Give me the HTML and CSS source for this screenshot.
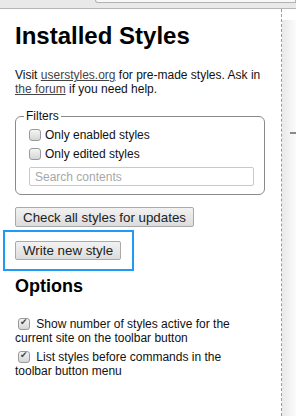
FILE: index.html
```html
<html>
	<head>
		<link rel="stylesheet" href="styles.css">
	</head>
	<body>
		<div class="topbar"><div class="urlbar"></div></div>
		<div class="main">
			<div class="sidebar">
				<h1>Installed Styles</h1>
				<p class="intro">Visit <a href="#">userstyles.org</a> for pre-made styles. Ask in <a href="#">the forum</a> if you need help.</p>
				<fieldset class="filters">
					<legend>Filters</legend>
					<label class="filter"><input type="checkbox" class="check"> Only enabled styles</label>
					<label class="filter"><input type="checkbox" class="check"> Only edited styles</label>
					<input type="text" class="search" placeholder="Search contents">
				</fieldset>
				<div class="actions">
					<button class="btn">Check all styles for updates</button>
				</div>
				<div class="newStyle">
					<button class="btn">Write new style</button>
				</div>
				<h2>Options</h2>
				<div class="option"><input type="checkbox" class="check" checked> Show number of styles active for the current site on the toolbar button</div>
				<div class="option"><input type="checkbox" class="check" checked> List styles before commands in the toolbar button menu</div>
			</div>
			<div class="preview">
				<div class="previewBody">
					<div class="tick"></div>
				</div>
			</div>
		</div>
	</body>
</html>
```
FILE: styles.css
```css
html, body {
	margin: 0;
	padding: 0;
	width: 100%;
	height: 100%;
	background: #fff;
	font-family: "Liberation Sans", Arial, sans-serif;
	font-size: 12px;
	color: #111;
	overflow: hidden;
}

.topbar {
	height: 8px;
	background: #e9e9e9;
	border-bottom: 1px solid #b5b5b5;
}

.urlbar {
	margin-left: 95px;
	height: 2px;
	background: #f7f7f7;
	border: 1px solid #b3b3b3;
	border-top: none;
	border-bottom-left-radius: 3px;
}

.main {
	display: flex;
	flex-direction: row;
	height: calc(100% - 9px);
}

.sidebar {
	width: 266px;
	padding-left: 15px;
	border-right: 1px dashed #9a9a9a;
}

h1 {
	margin: 13px 0 0;
	font-size: 24px;
	font-weight: bold;
	color: #000;
	line-height: 28px;
}

.intro {
	margin: 18px 0 0;
	line-height: 14px;
	width: 252px;
}

.intro a {
	color: #444;
	text-decoration: underline;
}

.filters {
	margin: 13px 0 0;
	width: 225px;
	padding: 2px 10px 8px 13px;
	border: 1px solid #8a8a8a;
	border-radius: 6px;
}

.filters legend {
	margin-left: -5px;
	padding: 0 2px;
	line-height: 14px;
}

.filter {
	display: flex;
	align-items: center;
	height: 19px;
}

.check {
	-webkit-appearance: none;
	appearance: none;
	width: 12px;
	height: 12px;
	margin: 0 4px 0 0;
	border: 1px solid #9a9a9a;
	border-radius: 3px;
	background: linear-gradient(#f4f4f4, #d6d6d6);
	box-sizing: border-box;
	position: relative;
	vertical-align: -2px;
}

.check:checked::after {
	content: "\2714";
	position: absolute;
	left: 1px;
	top: -2px;
	font-family: "DejaVu Sans", sans-serif;
	font-size: 9px;
	color: #444;
}

.search {
	display: block;
	margin-top: 4px;
	width: 225px;
	height: 19px;
	box-sizing: border-box;
	border: 1px solid #c9c9c9;
	border-radius: 2px;
	padding: 0 5px;
	font-family: "Liberation Sans", Arial, sans-serif;
	font-size: 12px;
}

.search::placeholder {
	color: #a8a8a8;
}

.actions {
	margin-top: 12px;
}

.btn {
	height: 20px;
	padding: 0 7px;
	font-family: "Liberation Sans", Arial, sans-serif;
	font-size: 13.33px;
	color: #222;
	background: linear-gradient(#f2f2f2, #dcdcdc);
	border: 1px solid #a9a9a9;
	border-radius: 2px;
}

.newStyle .btn {
	height: 19px;
}

.newStyle {
	display: inline-block;
	margin: 3px 0 0 -12px;
	padding: 9px 11px 9px 10px;
	border: 2px solid #1e9bf5;
}

h2 {
	margin: 5px 0 0;
	font-size: 18px;
	font-weight: bold;
	color: #000;
	line-height: 21px;
}

.option {
	margin-top: 20px;
	line-height: 14px;
	width: 240px;
}

.option + .option {
	margin-top: 5px;
}

.option .check {
	margin: 0 3px 0 3px;
}

.preview {
	flex: 1;
	display: flex;
	flex-direction: column;
	padding-top: 11px;
}

.previewBody {
	flex: 1;
	background: linear-gradient(to right, #e9e9e9, #fbfbfb);
}

.tick {
	margin: 112px 0 0 8px;
	width: 6px;
	height: 2px;
	background: #8a8a8a;
}
```
